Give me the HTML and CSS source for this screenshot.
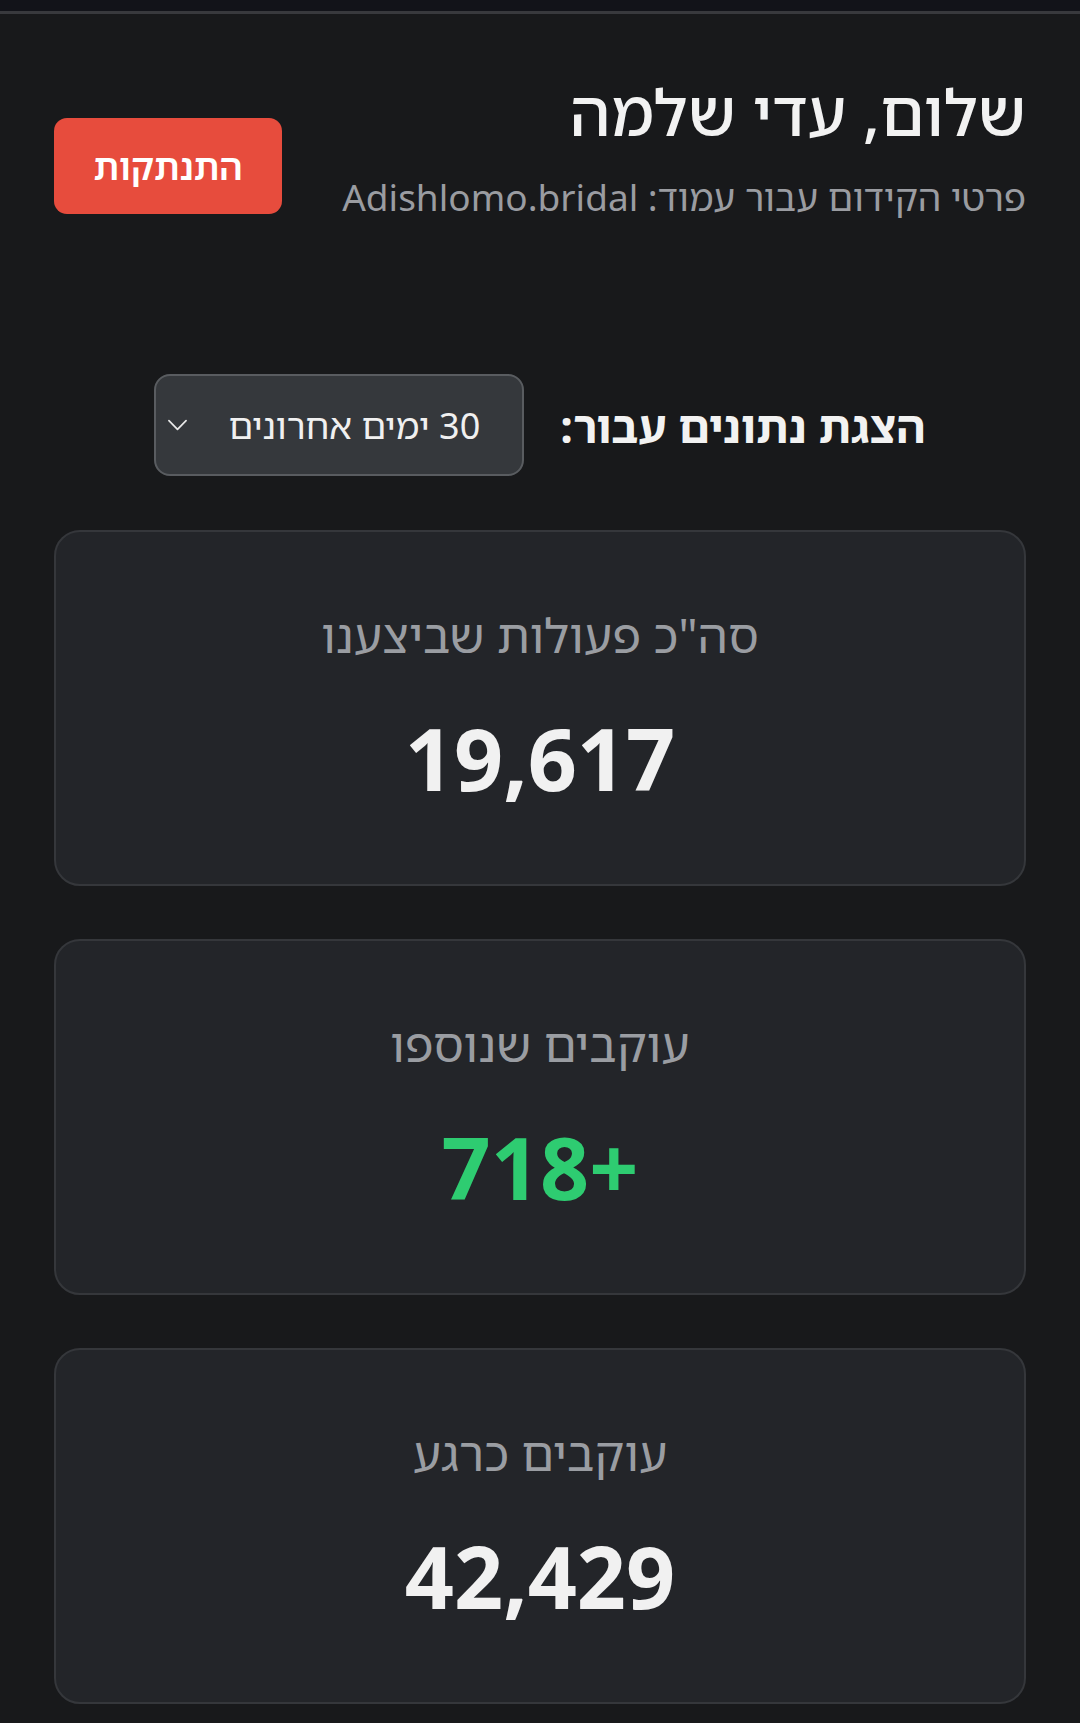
FILE: index.html
```html
<!DOCTYPE html>
<html lang="he" dir="rtl">
<head>
<meta charset="utf-8">
<title>לוח בקרה</title>
<link rel="stylesheet" href="styles.css">
</head>
<body>
<div class="topbar"></div>
<main class="page">
  <header class="header">
    <div class="welcome">
      <h1 class="title">שלום, עדי שלמה</h1>
      <p class="subtitle">פרטי הקידום עבור עמוד: Adishlomo.bridal</p>
    </div>
    <button class="logout">התנתקות</button>
  </header>

  <section class="range">
    <span class="range-label">הצגת נתונים עבור:</span>
    <div class="select">
      <span class="select-text">30 ימים אחרונים</span>
      <svg class="chevron" viewBox="0 0 24 14" width="21" height="12"><path d="M2 2 L12 12 L22 2" fill="none" stroke="#e8e8e8" stroke-width="2" stroke-linecap="round" stroke-linejoin="round"/></svg>
    </div>
  </section>

  <section class="cards">
    <div class="card">
      <div class="card-label">סה"כ פעולות שביצענו</div>
      <div class="card-value">19,617</div>
    </div>
    <div class="card">
      <div class="card-label">עוקבים שנוספו</div>
      <div class="card-value green"><span class="ltr" dir="ltr">718+</span></div>
    </div>
    <div class="card">
      <div class="card-label">עוקבים כרגע</div>
      <div class="card-value">42,429</div>
    </div>
  </section>
</main>
</body>
</html>
```
FILE: styles.css
```css
html, body {
  margin: 0;
  padding: 0;
}
body {
  background: #18191b;
  color: #f1f1f1;
  font-family: "Noto Sans", "Noto Sans Hebrew", "DejaVu Sans", sans-serif;
  width: 1080px;
  min-height: 1723px;
}
.topbar {
  height: 11px;
  background: #121319;
  border-bottom: 3px solid #38393d;
}
.page {
  padding: 0 54px;
}
.header {
  display: flex;
  justify-content: space-between;
  align-items: flex-start;
  padding-top: 58px;
}
.welcome {
  text-align: right;
}
.title {
  margin: 0;
  font-size: 64px;
  font-weight: 500;
  line-height: 80px;
  color: #f2f2f2;
}
.subtitle {
  margin: 20px 0 0 0;
  font-size: 37px;
  line-height: 50px;
  color: #9a9ca1;
}
.logout {
  width: 228px;
  height: 96px;
  margin-top: 46px;
  border: none;
  border-radius: 13px;
  background: #e74c3d;
  color: #fff;
  font-family: inherit;
  font-size: 36px;
  font-weight: 600;
  cursor: pointer;
}
.range {
  display: flex;
  justify-content: center;
  align-items: center;
  gap: 36px;
  margin-top: 152px;
}
.range-label {
  font-size: 45px;
  font-weight: 700;
  color: #f2f2f2;
}
.select {
  width: 370px;
  height: 102px;
  box-sizing: border-box;
  display: flex;
  align-items: center;
  justify-content: space-between;
  padding: 0 42px 0 11px;
  background: #35383c;
  border: 2px solid #595c60;
  border-radius: 16px;
}
.select-text {
  font-size: 36px;
  color: #f0f0f0;
}
.chevron {
  display: block;
}
.cards {
  display: flex;
  flex-direction: column;
  gap: 53px;
  margin-top: 54px;
}
.card {
  height: 356px;
  box-sizing: border-box;
  padding-bottom: 6px;
  background: #232529;
  border: 2px solid #35373b;
  border-radius: 26px;
  display: flex;
  flex-direction: column;
  align-items: center;
  justify-content: center;
  gap: 41px;
}
.card-label {
  font-size: 48px;
  color: #9a9da2;
  line-height: 64px;
}
.card-value {
  font-size: 86px;
  font-weight: 700;
  color: #f1f1f1;
  line-height: 100px;
}
.card-value.green {
  color: #2ecc71;
}
.ltr {
  unicode-bidi: isolate;
}
```
